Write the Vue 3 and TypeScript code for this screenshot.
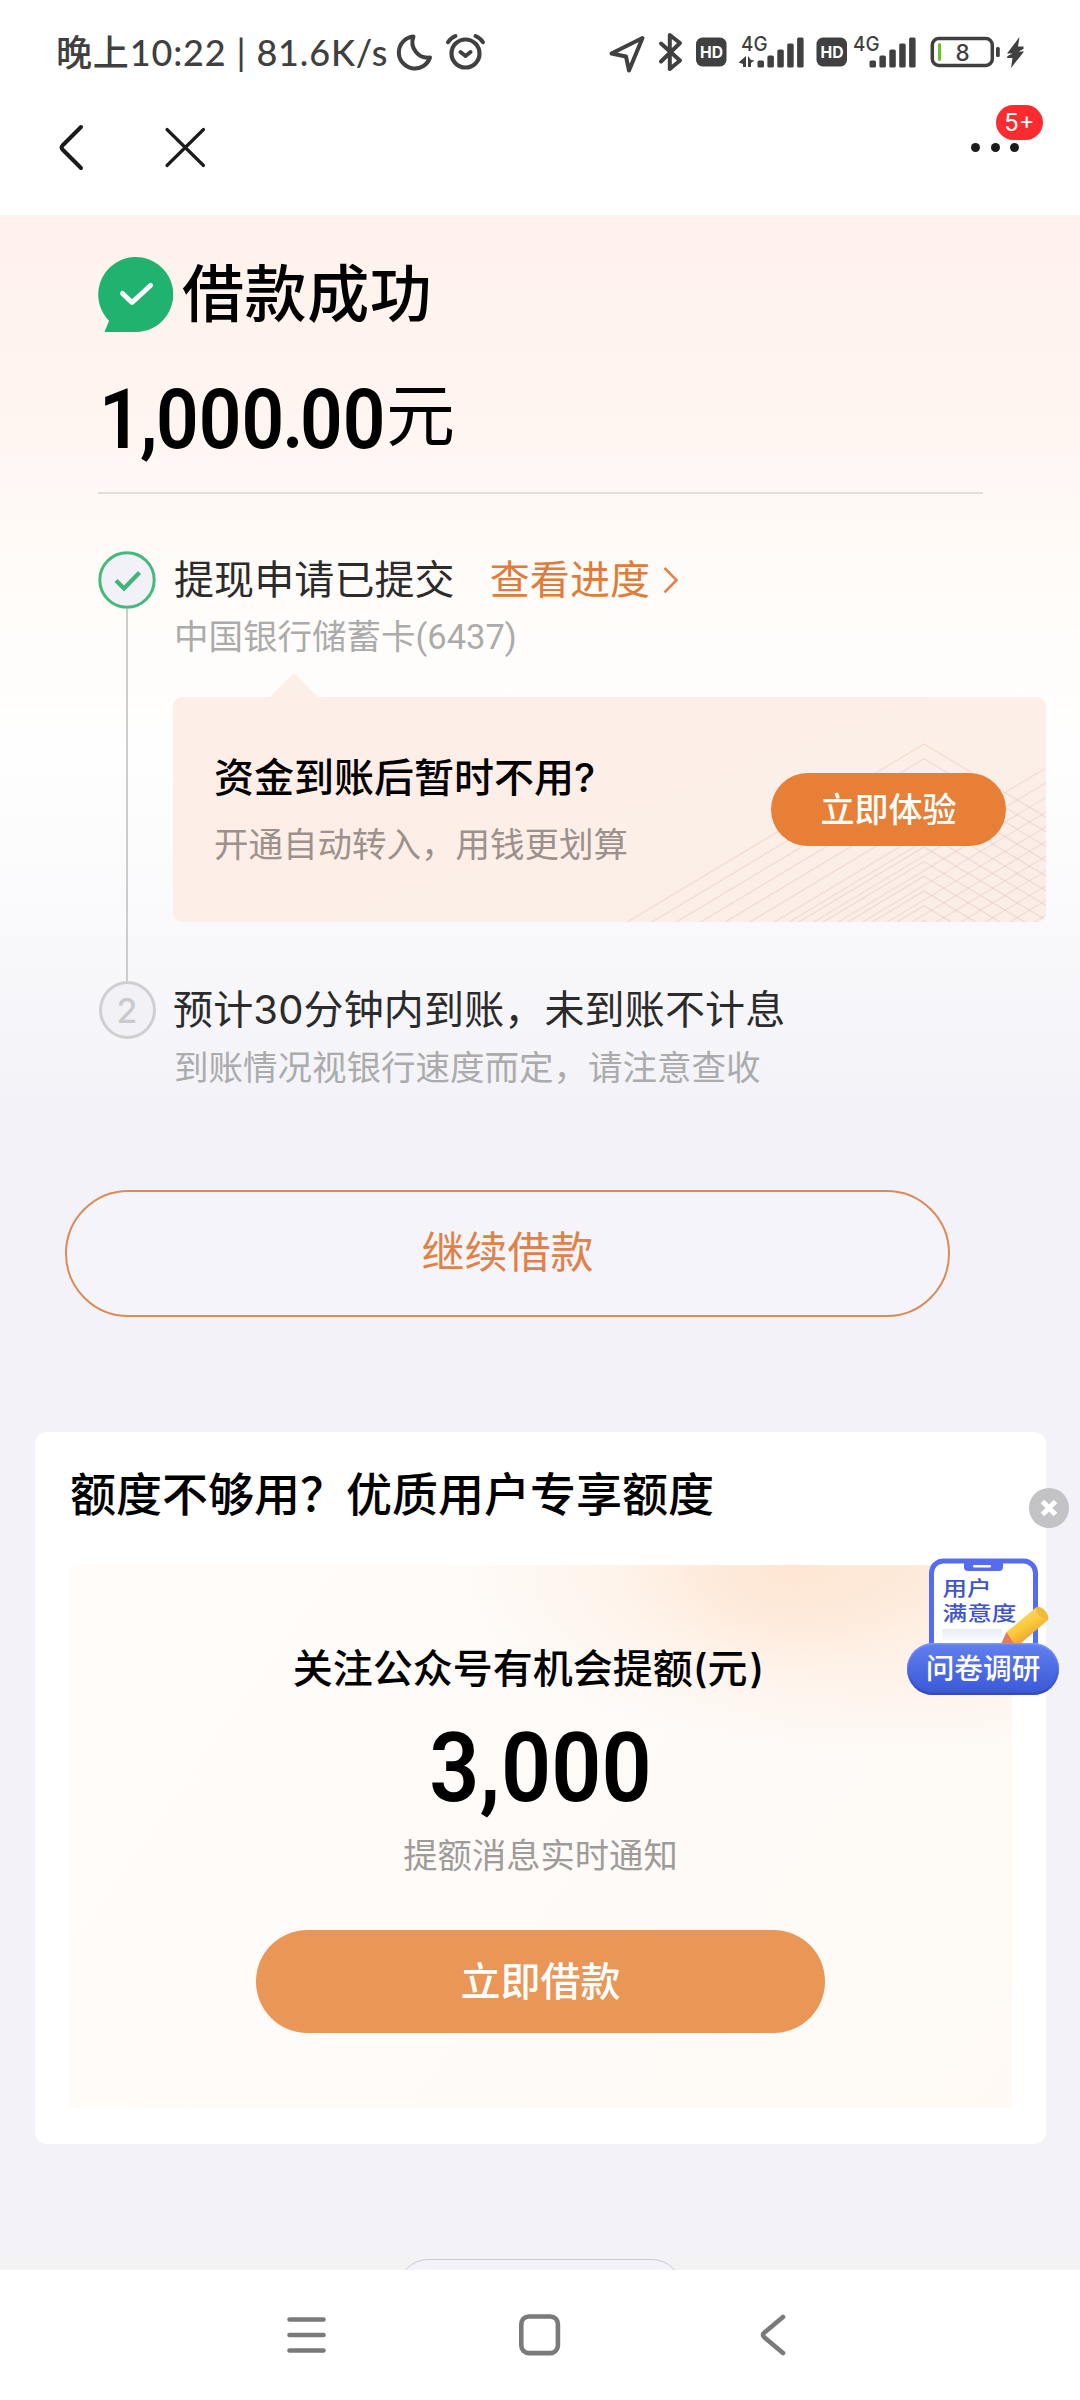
<script setup lang="ts">
interface Bar { x: number; top: number }

const heights: number[] = [7, 12, 18, 24, 30]
const makeBars = (start: number): Bar[] =>
  heights.map((h, i) => ({ x: start + i * 9.9, top: 67.5 - h }))
const barsA = makeBars(757.5)
const barsB = makeBars(869.5)

const peaks: number[] = Array.from({ length: 13 }, (_, i) => 47 + i * 14.7)
const slopes: number[] = Array.from({ length: 30 }, (_, i) => 71 + i * 14.7)
</script>

<template>
  <div class="screen">
    <header class="status">
      <span class="clock">晚上10:22 | 81.6K/s</span>
      <svg class="slice" width="102" height="104" viewBox="394 0 102 104" fill="none" stroke="#404040" stroke-width="4" stroke-linecap="round" stroke-linejoin="round">
        <path d="M413.500 36.500A16 16 0 1 0 430 57.500A15.500 15.500 0 0 1 413.500 36.500Z" />
        <circle cx="465.500" cy="53.500" r="14" stroke-width="4.200" />
        <path d="M460.500 52l5 4 5-4" />
        <path d="M448 42.200q2.500-4 7.500-6.200M483 42.200q-2.500-4-7.500-6.200" />
      </svg>
      <span class="spring"></span>
      <svg class="slice" width="424" height="104" viewBox="602 0 424 104" fill="none" stroke="#404040" stroke-linecap="round" stroke-linejoin="round">
        <path d="M642.500 38L611.500 53.500l14.500 3 3 14z" stroke-width="4" />
        <path d="M661 43.500l19 17L669.800 69V35l10.200 8-19 18.500" stroke-width="4" />
        <g stroke="none" fill="#404040">
          <rect x="696" y="37.500" width="30.500" height="29" rx="6.500" />
          <rect x="816.500" y="37.500" width="30.500" height="29" rx="6.500" />
          <rect v-for="b in barsA" :key="b.x" :x="b.x" :y="b.top" width="6.500" :height="67.500 - b.top" rx="1.600" />
          <rect v-for="b in barsB" :key="b.x" :x="b.x" :y="b.top" width="6.500" :height="67.500 - b.top" rx="1.600" />
          <path d="M746 56v11h-3v-3l-4.500-1.500zM748 67V56l3 4 3.500.5-3.500 2.500V67z" />
          <rect x="996" y="47" width="3.800" height="10" rx="1.500" />
          <path d="M1019.500 37l-12.500 16.500h5.500l-5 2.500-.5 2h5.500l-1.500 10 13-16.500h-5.500l5-2.500v-2.500h-5.500z" />
        </g>
        <g stroke="none" class="glyphs">
          <text x="711.500" y="57.600" font-size="16" text-anchor="middle" fill="#fff" font-weight="700" textLength="23" lengthAdjust="spacingAndGlyphs">HD</text>
          <text x="832" y="57.600" font-size="16" text-anchor="middle" fill="#fff" font-weight="700" textLength="23" lengthAdjust="spacingAndGlyphs">HD</text>
          <text x="741" y="50.500" font-size="20.500" fill="#404040" font-weight="500" textLength="26.500" lengthAdjust="spacingAndGlyphs">4G</text>
          <text x="853" y="50.500" font-size="20.500" fill="#404040" font-weight="500" textLength="26.500" lengthAdjust="spacingAndGlyphs">4G</text>
          <text x="962.500" y="60.500" font-size="22.500" text-anchor="middle" fill="#404040" font-weight="500">8</text>
        </g>
        <rect x="932.300" y="38.500" width="60" height="27" rx="6.500" stroke-width="3.500" />
        <path d="M939.500 44.500v15" stroke="#6cbf2d" stroke-width="3" />
      </svg>
    </header>

    <nav class="topbar">
      <svg width="160" height="111" viewBox="50 104 160 111" fill="none" stroke="#1b1b1b" stroke-linecap="round" stroke-linejoin="round">
        <path d="M81 127L62.500 145.500q-1.800 2 0 4L81 168" stroke-width="4" />
        <path d="M167 129.500l36.500 36M203.500 129.500l-36.500 36" stroke-width="3.200" />
      </svg>
      <div class="more">
        <i></i><i></i><i></i>
        <b class="badge">5+</b>
      </div>
    </nav>

    <main>
      <section class="headline">
        <svg width="75" height="75" viewBox="0 0 75 75">
          <path d="M37.500 75H6.500L11 63.800A37.500 37.500 0 1 1 37.500 75Z" fill="#20b26f" />
          <path d="M24.500 36.500l9.500 9L52.500 28.500" fill="none" stroke="#fff" stroke-width="5" stroke-linecap="round" stroke-linejoin="round" />
        </svg>
        <h1>借款成功</h1>
      </section>
      <div class="amount"><span class="din"><span class="one">1</span><span class="comma">,</span>000<span class="dot">.</span>00</span><span class="unit">元</span></div>
      <hr />

      <section class="step">
        <div class="rail">
          <svg width="58" height="58" viewBox="0 0 58 58" fill="none">
            <circle cx="29" cy="29" r="27.200" fill="#f2f1f8" stroke="#45b97c" stroke-width="3" />
            <path d="M18 29.500l8 8L41.500 21.500" stroke="#3fb677" stroke-width="4.200" />
          </svg>
          <span class="line"></span>
        </div>
        <div class="body">
          <div class="lead">
            <span>提现申请已提交</span>
            <a>查看进度</a>
            <svg width="16" height="28" viewBox="0 0 16 28" fill="none" stroke="#e0834a" stroke-width="2.600"><path d="M1.500 2l12 12.200-12 12.200" /></svg>
          </div>
          <p class="note bank">中国银行储蓄卡(6437)</p>
          <div class="promo">
            <svg class="mesh" width="873" height="225" viewBox="0 0 873 225" fill="none" stroke="#d8b0a4" stroke-width="1.200">
              <g opacity=".3">
                <path v-for="y in peaks" :key="y" :d="`M351 ${y + 240}L751 ${y}L873 ${y + 73.2}`" />
              </g>
              <g opacity=".26">
                <path v-for="y in slopes" :key="y" :d="`M873 ${y}L473 ${y + 240}`" />
              </g>
            </svg>
            <div class="promo-text">
              <h2>资金到账后暂时不用?</h2>
              <p>开通自动转入，用钱更划算</p>
            </div>
            <button class="try">立即体验</button>
          </div>
        </div>
      </section>

      <section class="step last">
        <div class="rail">
          <span class="num">2</span>
        </div>
        <div class="body">
          <div class="lead"><span>预计30分钟内到账，未到账不计息</span></div>
          <p class="note">到账情况视银行速度而定，请注意查收</p>
        </div>
      </section>

      <button class="again">继续借款</button>

      <section class="card">
        <h3>额度不够用？优质用户专享额度</h3>
        <div class="offer">
          <h4>关注公众号有机会提额(元<span class="paren">)</span></h4>
          <div class="quota din">3<span class="gap">,</span>000</div>
          <p>提额消息实时通知</p>
          <button class="borrow">立即借款</button>
        </div>
      </section>

      <div class="peek"><span></span></div>

      <aside class="survey">
        <svg class="close" width="40" height="40" viewBox="0 0 40 40">
          <circle cx="20" cy="20" r="20" fill="#c3c3c6" />
          <path d="M13.500 13.500l13 13M26.500 13.500l-13 13" stroke="#fff" stroke-width="5" />
        </svg>
        <div class="phone">
          <svg width="152" height="90" viewBox="907 1557 152 90">
            <defs>
              <linearGradient id="pencil" x1=".3" y1=".2" x2=".7" y2=".8">
                <stop offset="0" stop-color="#fbd768" /><stop offset=".5" stop-color="#fbc93a" /><stop offset="1" stop-color="#eaa336" />
              </linearGradient>
              <linearGradient id="shade" x1="0" y1="0" x2="0" y2="1">
                <stop offset="0" stop-color="#e9ebf8" /><stop offset="1" stop-color="#fff" />
              </linearGradient>
            </defs>
            <path d="M931.500 1647V1573a12 12 0 0 1 12-12h80a12 12 0 0 1 12 12v74" fill="#fff" stroke="#566cf0" stroke-width="5" />
            <path d="M964 1560h39v7q0 4-4 4h-31q-4 0-4-4z" fill="#566cf0" />
            <rect x="973" y="1565" width="18" height="2.400" rx="1.200" fill="#fff" />
            <rect x="942" y="1629" width="60" height="14" fill="url(#shade)" />
            <text fill="#3f55c9" font-weight="500" class="cjk" font-size="20.500">
              <tspan x="942.500" y="1595.500" textLength="49" lengthAdjust="spacingAndGlyphs">用户</tspan>
              <tspan x="942.500" y="1620.500" textLength="74" lengthAdjust="spacingAndGlyphs">满意度</tspan>
            </text>
            <path d="M1006.500 1632L1036 1607.500q3-1.500 8 4 5.500 5.500 4 8.500L1021 1643h-11z" fill="url(#pencil)" />
            <ellipse cx="1042.300" cy="1613.300" rx="3.800" ry="8" transform="rotate(-42 1042.300 1613.300)" fill="#eebb3c" />
            <path d="M1001.500 1643l5-11 7 11z" fill="#e27b62" />
          </svg>
        </div>
        <div class="pill">问卷调研</div>
      </aside>
    </main>

    <footer class="keys">
      <svg width="60" height="60" viewBox="276 2305 60 60" stroke="#7a7a7a" stroke-width="4.600" stroke-linecap="round"><path d="M289.500 2319.500h34M289.500 2335h34M289.500 2350.500h34" /></svg>
      <svg width="60" height="60" viewBox="510 2305 60 60" fill="none" stroke="#7a7a7a" stroke-width="4.600"><rect x="521.300" y="2316.500" width="36.600" height="36.600" rx="7.500" /></svg>
      <svg width="60" height="60" viewBox="743 2305 60 60" fill="none" stroke="#7a7a7a" stroke-width="4.600" stroke-linecap="round" stroke-linejoin="round"><path d="M783 2317L764.500 2332.500q-3 2.500 0 5L783 2353" /></svg>
    </footer>
  </div>
</template>

<style>
body { background: #fff; }
</style>

<style scoped>
* { box-sizing: border-box; margin: 0; padding: 0; }
.screen {
  width: 1080px; height: 2400px; display: flex; flex-direction: column; overflow: hidden;
  background: #fff; color: #000; font-family: Inter, "Noto Sans CJK SC", sans-serif; font-weight: 400;
}
svg { display: block; flex: none; }
.glyphs { font-family: Inter, sans-serif; }
.cjk { font-family: "Noto Sans CJK SC", sans-serif; }
h1, h2, h3, h4 { font-weight: 500; white-space: nowrap; }
p, span, a { white-space: nowrap; }
button { border: 0; font-family: inherit; display: block; flex: none; }

.status { height: 104px; flex: none; display: flex; align-items: center; padding: 0 54px 0 56px; color: #404040; }
.clock { width: 338px; flex: none; font-family: Lato, "Noto Sans CJK SC", sans-serif; font-size: 36px; font-weight: 500; letter-spacing: .85px; line-height: 104px; height: 104px; }
.spring { flex: 1; }
.topbar { height: 111px; flex: none; display: flex; justify-content: space-between; padding: 0 61px 0 50px; }
.more { position: relative; width: 48px; display: flex; justify-content: space-between; align-items: center; height: 86px; }
.more i { width: 9px; height: 9px; border-radius: 50%; background: #1b1b1b; }
.badge { position: absolute; left: 25px; top: 1px; width: 47px; height: 35px; border-radius: 18px; background: #fa2c30; color: #fff; font-size: 24px; font-weight: 400; line-height: 35px; text-align: center; }

main {
  position: relative; height: 2055px; flex: none; overflow: hidden; padding-top: 42px; display: flex; flex-direction: column;
  background: linear-gradient(#fff2ed 0, #fff4ef 160px, #fff9f5 300px, #fffdfb 430px, #fefefe 540px, #fafafc 690px, #f3f2f8 890px);
}
.headline { display: flex; align-items: center; gap: 9px; padding-left: 98px; height: 75px; }
h1 { font-size: 62px; letter-spacing: .6px; line-height: 75px; }
.din { font-family: Roboto, sans-serif; font-weight: 600; }
.amount { height: 110px; margin-top: 33px; padding-left: 99px; display: flex; line-height: 110px; }
.amount .din { font-size: 83px; transform: scaleX(.9); transform-origin: 0 50%; width: 287px; }
.one { letter-spacing: -2px; }
.comma { letter-spacing: -1.500px; }
.dot { letter-spacing: -4px; margin-left: -2px; }
.unit { font-size: 69px; line-height: 103px; }
hr { border: 0; height: 2px; background: #e3dedc; width: 885px; margin: 17px 0 57px 98px; }

.step { display: flex; padding-left: 98px; gap: 17px; height: 430px; }
.step.last { height: 115px; }
.rail { width: 58px; display: flex; flex-direction: column; align-items: center; }
.line { width: 2px; flex: 1; background: #ccc; }
.num { width: 57px; height: 58px; border: 3px solid #cfcfd2; border-radius: 50%; background: #f2f2f6; color: #cacacd; font-size: 34px; font-weight: 500; line-height: 53px; text-align: center; }
.lead { display: flex; align-items: center; height: 58px; font-size: 40px; letter-spacing: .1px; color: #2b2b2b; line-height: 58px; padding-left: 1px; }
.last .lead { letter-spacing: .15px; padding-left: 0; }
.lead a { color: #e07b39; margin: 0 13px 0 35px; }
.note { font-size: 34.500px; line-height: 56px; height: 54px; color: #ababab; padding-left: 1px; }
.bank { font-family: Roboto, "Noto Sans CJK SC", sans-serif; }
.last .note { line-height: 57px; }
.promo { position: relative; width: 873px; height: 225px; margin-top: 34px; border-radius: 9px; background: linear-gradient(160deg, #fdeee7, #fcefe8 60%, #faece6); display: flex; align-items: center; justify-content: space-between; padding: 0 40px 0 41px; }
.promo::before { content: ""; position: absolute; left: 97px; top: -24px; border: 24px solid transparent; border-top: 0; border-bottom-color: #fcefe8; }
.mesh { position: absolute; inset: 0; border-radius: 9px; }
.promo-text { position: relative; }
h2 { font-size: 40px; line-height: 60px; }
.promo p { font-size: 34.500px; color: #9c918c; line-height: 54px; margin-top: 10px; }
.try { position: relative; width: 235px; height: 73px; border-radius: 37px; background: #e77f37; color: #fff; font-size: 34px; font-weight: 500; line-height: 71px; }

.again { width: 885px; height: 127px; margin: 94px 0 0 65px; border: 2px solid #dc8b55; border-radius: 64px; background: #f5f4fa; color: #df8248; font-size: 43px; line-height: 118px; padding-bottom: 3px; }

.card { width: 1011px; height: 712px; margin: 115px 0 0 35px; background: #fff; border-radius: 12px; padding: 0 34px; flex: none; }
h3 { font-size: 46px; line-height: 60px; padding: 32px 0 0 1px; height: 133px; }
.offer {
  height: 543px; display: flex; flex-direction: column; align-items: center; padding-top: 74px;
  background:
    radial-gradient(ellipse 170px 110px at 720px 0, #fee6d3 0, #fee6d300 100%),
    radial-gradient(ellipse 420px 190px at 800px 0, #feeada 0, #feeada00 100%),
    linear-gradient(125deg, #fffcf9, #fefaf7 60%, #fef9f3);
}
h4 { font-size: 40px; line-height: 60px; padding-right: 24px; }
.paren { margin-left: 2px; }
.quota { font-size: 96px; line-height: 110px; margin-top: 14px; transform: scaleX(.915); }
.gap { letter-spacing: 1px; }
.offer p { font-size: 34.300px; line-height: 50px; color: #9f9b98; margin-top: 8px; }
.borrow { width: 569px; height: 103px; margin-top: 49px; border-radius: 52px; background: #ea9656; color: #fff; font-size: 40px; font-weight: 500; line-height: 100px; }

.peek { margin-top: auto; height: 14px; flex: none; background: #f3f3f4; display: flex; justify-content: center; overflow: visible; }
.peek span { width: 284px; height: 60px; margin-top: 3px; border: 1.500px solid #cbcbd0; border-radius: 34px; background: #f3f2f8; }

.survey { position: absolute; left: 907px; top: 1273px; width: 162px; display: flex; flex-direction: column; }
.close { align-self: flex-end; }
.phone { height: 86px; margin-top: 29px; }
.pill { position: relative; width: 152px; height: 52px; border-radius: 27px; background: linear-gradient(#6380f0, #4967e2 60%, #3b58d6); box-shadow: inset 0 1px 2px #8ea3f8, inset 0 -2px 2px #3048b8; color: #fff; font-size: 28.700px; font-weight: 500; line-height: 51px; text-align: center; }

.keys { flex: 1; display: flex; gap: 173.500px; padding-left: 276px; padding-top: 35px; background: #fff; }
</style>
